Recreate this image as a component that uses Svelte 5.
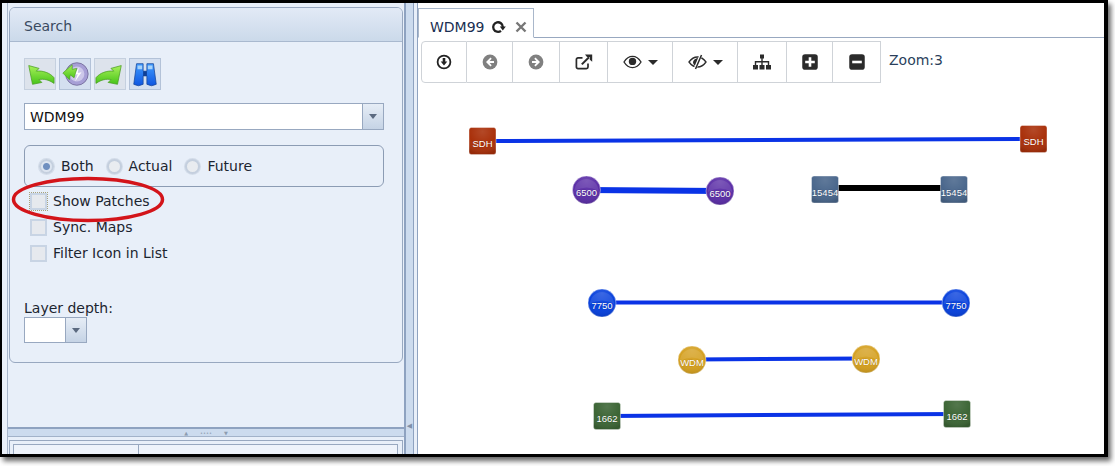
<script>
	const nodes = [
		{ x: 482.5, y: 141, label: 'SDH', fill: '#a9300a', shape: 'square' },
		{ x: 1033.5, y: 139, label: 'SDH', fill: '#a9300a', shape: 'square' },
		{ x: 586.5, y: 190, label: '6500', fill: '#5a2da6', shape: 'circle' },
		{ x: 720, y: 191, label: '6500', fill: '#5a2da6', shape: 'circle' },
		{ x: 825, y: 189.5, label: '15454', fill: '#4a678c', shape: 'square' },
		{ x: 954, y: 189.5, label: '15454', fill: '#4a678c', shape: 'square' },
		{ x: 602, y: 303, label: '7750', fill: '#0740dc', shape: 'circle' },
		{ x: 956, y: 303, label: '7750', fill: '#0740dc', shape: 'circle' },
		{ x: 692, y: 360, label: 'WDM', fill: '#d49f1e', shape: 'circle' },
		{ x: 866, y: 359, label: 'WDM', fill: '#d49f1e', shape: 'circle' },
		{ x: 607, y: 416, label: '1662', fill: '#3c6535', shape: 'square' },
		{ x: 957, y: 414, label: '1662', fill: '#3c6535', shape: 'square' }
	];
	const links = [
		{ a: 0, b: 1, w: 4, c: '#0a33e6', dy: 0 },
		{ a: 2, b: 3, w: 6, c: '#0a33e6', dy: 0 },
		{ a: 4, b: 5, w: 6, c: '#000', dy: -1.5 },
		{ a: 6, b: 7, w: 4, c: '#0a33e6', dy: -0.5 },
		{ a: 8, b: 9, w: 4, c: '#0a33e6', dy: -0.5 },
		{ a: 10, b: 11, w: 4, c: '#0a33e6', dy: 0 }
	];
</script>

<div class="shot">
	<div class="frame">
		<div class="left">
			<div class="left-inner">
				<div class="upper">
					<section class="panel">
						<header class="panel-head">Search</header>
						<div class="panel-body">
							<div class="tools">
								<span class="tool">
									<svg viewBox="0 0 32 32" width="32" height="32"><defs><linearGradient id="grn" x1="0" y1="0" x2="0" y2="1"><stop offset="0" stop-color="#a8f05a"/><stop offset="1" stop-color="#46c418"/></linearGradient></defs><path d="M4 7 L15 10 L12 13 C19 12 27 15 31 20 L31 26 C25 22 20 21 15 22 L18 25 L8 27Z" fill="url(#grn)" stroke="#4a9e22" stroke-width=".8"/></svg>
								</span>
								<span class="tool on">
									<svg viewBox="0 0 32 32" width="32" height="32"><circle cx="18" cy="16" r="12" fill="#a79fd6" stroke="#77709f"/><circle cx="18" cy="16" r="8" fill="#cdc8ea"/><path d="M20 9 L15 17 L19 16 L16 24 L23 14 L19 15Z" fill="#fff"/><path d="M3 15 L13 6 L13 11 L18 10 L15 20 L11 17 L10 22Z" fill="url(#grn)" stroke="#4a9e22" stroke-width=".7"/></svg>
								</span>
								<span class="tool">
									<svg viewBox="0 0 32 32" width="32" height="32"><path d="M28 7 L17 10 L20 13 C13 12 5 15 1 20 L1 26 C7 22 12 21 17 22 L14 25 L24 27Z" fill="url(#grn)" stroke="#4a9e22" stroke-width=".8"/></svg>
								</span>
								<span class="tool on">
									<svg viewBox="0 0 32 32" width="32" height="32"><defs><linearGradient id="blu" x1="0" y1="0" x2="0" y2="1"><stop offset="0" stop-color="#3f9bff"/><stop offset="1" stop-color="#0f55e0"/></linearGradient></defs><path d="M7 5h7v8h4V5h7l3 22q-5 3-10 0V18h-4v9q-5 3-10 0Z" fill="url(#blu)" stroke="#17459a" stroke-width=".8"/><path d="M8 7h5v4H8zM19 7h5v4h-5z" fill="#a6d2fa"/><path d="M14 13h4v5h-4z" fill="#0f3f96"/></svg>
								</span>
							</div>
							<div class="combo wide">
								<span class="combo-text">WDM99</span>
								<span class="combo-btn"><i></i></span>
							</div>
							<div class="radios">
								<label class="radio checked"><i></i>Both</label>
								<label class="radio"><i></i>Actual</label>
								<label class="radio"><i></i>Future</label>
							</div>
							<div class="checks">
								<label class="check focus"><i></i>Show Patches</label>
								<label class="check"><i></i>Sync. Maps</label>
								<label class="check"><i></i>Filter Icon in List</label>
							</div>
							<div class="depth-label">Layer depth:</div>
							<div class="combo small">
								<span class="combo-text"></span>
								<span class="combo-btn"><i></i></span>
							</div>
						</div>
					</section>
				</div>
				<div class="hsplit"><span class="grip">▲</span><span class="dots">••••</span><span class="grip">▼</span></div>
				<div class="lower">
					<div class="grid-head"><span class="col1"></span><span class="col2"></span></div>
				</div>
			</div>
		</div>
		<div class="vsplit"><span>◀</span></div>
		<div class="right">
			<div class="right-inner">
				<div class="tabs">
					<div class="tab">
						WDM99
						<svg class="reload" viewBox="0 0 15 14" width="15" height="14"><path d="M10 10.800A4.800 4.800 0 1 1 11.800 7" fill="none" stroke="#222" stroke-width="2.300"/><path d="M8.800 6.500h6L11.800 10.500Z" fill="#222"/></svg>
						<svg class="close" viewBox="0 0 12 12" width="12" height="12"><path d="M1.500 1.500l9 9M10.500 1.500l-9 9" stroke="#777" stroke-width="2.400"/></svg>
					</div>
				</div>
				<div class="content">
					<div class="toolbar">
						<div class="btns">
							<button class="btn first" aria-label="Download">
								<svg viewBox="0 0 16 16" width="16" height="16"><circle cx="8" cy="8" r="6.400" fill="none" stroke="#222" stroke-width="1.800"/><path d="M6.700 4h2.600v3.500h2L8 11.500 4.700 7.500h2Z" fill="#222"/></svg>
							</button>
							<button class="btn" aria-label="Back">
								<svg viewBox="0 0 16 16" width="16" height="16"><circle cx="8" cy="8" r="7.400" fill="#808080"/><path d="M8.500 3.600 4 8l4.500 4.400 1.200-1.200L7.600 9H12V7H7.600l2.100-2.200Z" fill="#fff"/></svg>
							</button>
							<button class="btn" aria-label="Forward">
								<svg viewBox="0 0 16 16" width="16" height="16"><circle cx="8" cy="8" r="7.400" fill="#808080"/><path d="M7.500 3.600 12 8l-4.500 4.400-1.200-1.200L8.400 9H4V7h4.400L6.300 4.800Z" fill="#fff"/></svg>
							</button>
							<button class="btn" aria-label="Open">
								<svg viewBox="0 0 18 16" width="18" height="16"><path d="M13 9.500V13a1.600 1.600 0 0 1-1.600 1.600H3A1.600 1.600 0 0 1 1.400 13V5.500A1.600 1.600 0 0 1 3 3.900h4.500" fill="none" stroke="#2b2b2b" stroke-width="1.700"/><path d="M6.800 10.400 14 3.200" stroke="#2b2b2b" stroke-width="2"/><path d="M10 .6h7.200v7.200l-2.400-2V3h-2.800Z" fill="#2b2b2b"/></svg>
							</button>
							<button class="btn" aria-label="Show">
								<svg viewBox="0 0 19 14" width="19" height="14"><path d="M1 7C3.500 3 6.500 1.400 9.500 1.400S15.500 3 18 7c-2.500 4-5.500 5.600-8.500 5.600S3.500 11 1 7Z" fill="none" stroke="#2b2b2b" stroke-width="1.400"/><circle cx="9.500" cy="6.400" r="3.700" fill="#2b2b2b"/></svg>
								<i class="caret"></i>
							</button>
							<button class="btn" aria-label="Hide">
								<svg viewBox="0 0 19 16" width="19" height="16"><path d="M1 8C3.500 4.500 6.500 3 9.500 3S15.500 4.500 18 8c-2.500 3.500-5.500 5-8.500 5S3.500 11.500 1 8Z" fill="none" stroke="#2b2b2b" stroke-width="1.300"/><path d="M5 8c1-3 3-4 5.500-4L7.500 12C6 11 5 10 5 8Z" fill="#2b2b2b"/><path d="M13 1 7 15" stroke="#fff" stroke-width="3"/><path d="M13.500 1 7.500 15" stroke="#2b2b2b" stroke-width="1.500"/></svg>
								<i class="caret"></i>
							</button>
							<button class="btn" aria-label="Hierarchy">
								<svg viewBox="0 0 18 16" width="18" height="16"><path d="M7 .5h4v4H7zM0 11h5v4.500H0zM6.500 11h5v4.500h-5zM13 11h5v4.500h-5z" fill="#2b2b2b"/><path d="M9 4v7M2.500 11V7.700h13V11" fill="none" stroke="#2b2b2b" stroke-width="1.400"/></svg>
							</button>
							<button class="btn" aria-label="Zoom in">
								<svg viewBox="0 0 16 16" width="16" height="16"><rect width="15.500" height="15.500" x=".25" y=".25" rx="2.800" fill="#2b2b2b"/><path d="M6.700 3.200h2.600v3.500h3.500v2.600H9.300v3.500H6.700V9.300H3.200V6.700h3.500Z" fill="#fff"/></svg>
							</button>
							<button class="btn" aria-label="Zoom out">
								<svg viewBox="0 0 16 16" width="16" height="16"><rect width="15.500" height="15.500" x=".25" y=".25" rx="2.800" fill="#2b2b2b"/><path d="M3.200 6.700h9.600v2.600H3.200Z" fill="#fff"/></svg>
							</button>
						</div>
						<span class="zoom">Zoom:3</span>
					</div>
					<svg class="graph" width="1115" height="466" viewBox="0 0 1115 466">
						<defs>
							<radialGradient id="gloss" cx=".5" cy=".15" r=".85">
								<stop offset="0" stop-color="#fff" stop-opacity=".12"/>
								<stop offset=".6" stop-color="#fff" stop-opacity="0"/>
								<stop offset="1" stop-color="#000" stop-opacity=".12"/>
							</radialGradient>
						</defs>
						{#each links as l}
							<line x1={nodes[l.a].x} y1={nodes[l.a].y + l.dy} x2={nodes[l.b].x} y2={nodes[l.b].y + l.dy} stroke={l.c} stroke-width={l.w}/>
						{/each}
						{#each nodes as n}
							{#if n.shape === 'circle'}
								<circle cx={n.x} cy={n.y} r="14" fill={n.fill} stroke="#fff" stroke-opacity=".4"/>
								<circle cx={n.x} cy={n.y} r="14" fill="url(#gloss)"/>
								<path d="M{n.x - 12} {n.y + 1}a12 12 0 0 1 24 0q-12-7-24 0Z" fill="#fff" fill-opacity=".1"/>
							{:else}
								<rect x={n.x - 13.500} y={n.y - 13.500} width="27" height="27" rx="2.500" fill={n.fill} stroke="#fff" stroke-opacity=".4"/>
								<rect x={n.x - 13.500} y={n.y - 13.500} width="27" height="27" rx="2.500" fill="url(#gloss)"/>
							{/if}
							<text x={n.x} y={n.y + 6} text-anchor="middle" class="node-label">{n.label}</text>
						{/each}
					</svg>
				</div>
			</div>
		</div>
	</div>
	<svg class="circled" width="154" height="47" viewBox="0 0 154 47">
		<ellipse cx="77" cy="23.500" rx="74.500" ry="21" fill="none" stroke="#d3141a" stroke-width="3.500"/>
	</svg>
</div>

<style>
	:global(body) {
		margin: 0;
		background: #fff;
	}
	.shot {
		position: relative;
		width: 1115px;
		height: 466px;
		overflow: hidden;
		font-family: 'DejaVu Sans', sans-serif;
		font-size: 14px;
		color: #1c2530;
	}
	.circled {
		position: absolute;
		left: 11px;
		top: 176px;
	}
	.frame {
		box-sizing: border-box;
		width: 1108px;
		height: 457px;
		border: solid #000;
		border-width: 3px 4px 3px 2px;
		box-shadow: 3px 4px 5px rgba(0, 0, 0, 0.6);
		display: flex;
		background: #fff;
		overflow: hidden;
	}
	.left {
		width: 402px;
		flex: none;
		padding-left: 5px;
		box-sizing: border-box;
		background: #eaf0f9;
	}
	.left-inner {
		height: 100%;
		box-sizing: border-box;
		display: flex;
		flex-direction: column;
		background: #e8eff9;
		border-left: 1px solid #a8b6ca;
	}
	.upper {
		flex: 1;
		padding: 4px 1px 0;
		min-height: 0;
		border-bottom: 2px solid #8ea2c0;
	}
	.panel {
		height: 356px;
		box-sizing: border-box;
		border: 1px solid #98a8c0;
		border-radius: 6px;
		background: #e8eff9;
		overflow: hidden;
	}
	.panel-head {
		height: 34px;
		box-sizing: border-box;
		padding: 1px 14px 0;
		line-height: 35px;
		font-size: 14px;
		color: #3a4a60;
		background: linear-gradient(#e2eaf6, #cbd9ea);
		border-bottom: 1px solid #a9b9cf;
	}
	.panel-body {
		padding: 16px 14px 0;
	}
	.tools {
		display: flex;
		gap: 3px;
	}
	.tool {
		width: 32px;
		height: 32px;
		box-sizing: border-box;
		display: flex;
		align-items: center;
		justify-content: center;
		background: #dde3ec;
		border: 1px solid #c5d0df;
		overflow: hidden;
	}
	.tool.on {
		background: #d4dff0;
		border-color: #b3c2d8;
	}
	.combo {
		display: flex;
		background: #fff;
		border: 1px solid #98a8c0;
		box-sizing: border-box;
	}
	.combo.wide {
		width: 360px;
		height: 27px;
		margin-top: 13px;
	}
	.combo.small {
		width: 63px;
		height: 26px;
	}
	.combo-text {
		flex: 1;
		padding-left: 5px;
		line-height: 26px;
		font-size: 14px;
		color: #111;
	}
	.combo-btn {
		width: 20px;
		display: flex;
		align-items: center;
		justify-content: center;
		border-left: 1px solid #98a8c0;
		background: linear-gradient(#e6edf6, #c5d3e5);
	}
	.combo-btn i {
		width: 0;
		height: 0;
		border: 4px solid transparent;
		border-top: 5px solid #5b6a80;
		border-bottom: 0;
	}
	.radios {
		width: 360px;
		height: 42px;
		margin-top: 15px;
		box-sizing: border-box;
		border: 1px solid #8c9cb4;
		border-radius: 6px;
		padding-left: 14px;
		display: flex;
		align-items: center;
		gap: 13px;
	}
	.radio {
		display: flex;
		align-items: center;
		gap: 7px;
		color: #1c2530;
	}
	.radio i {
		width: 15px;
		height: 15px;
		border-radius: 50%;
		box-sizing: border-box;
		background: #e9ecf0;
		border: 2px solid #c4cfde;
		box-shadow: 0 0 0 1px #d3dce9;
	}
	.radio.checked i {
		background: radial-gradient(circle, #6f8fbf 0 3px, #dde5f0 4px);
	}
	.checks {
		display: flex;
		flex-direction: column;
		margin-top: 1px;
		padding-left: 6px;
	}
	.check {
		height: 26px;
		display: flex;
		align-items: center;
		gap: 6px;
		color: #1c2530;
	}
	.check i {
		width: 17px;
		height: 17px;
		box-sizing: border-box;
		background: #e6e9ee;
		border: 2px solid #c8d4e4;
	}
	.check.focus i {
		outline: 1px dotted #a8a27c;
	}
	.depth-label {
		margin-top: 33px;
		line-height: 18px;
	}
	.hsplit {
		height: 7px;
		flex: none;
		background: #ccdbee;
		border-bottom: 1px solid #a2b2c9;
		font-size: 5px;
		color: #8c9cb0;
		display: flex;
		align-items: center;
		justify-content: center;
		gap: 12px;
	}
	.lower {
		height: 17px;
		flex: none;
		padding: 3px 1px 0;
		box-sizing: border-box;
		background: #e8eff9;
	}
	.grid-head {
		display: flex;
		height: 100%;
		box-sizing: border-box;
		border: 1px solid #98a8c0;
		border-bottom: 0;
		padding: 3px 4px 0 3px;
	}
	.col1 {
		width: 126px;
		box-sizing: border-box;
		border: 1px solid #98a8c0;
		border-bottom: 0;
		background: #eef3fb;
	}
	.col2 {
		flex: 1;
		border-top: 1px solid #98a8c0;
		border-right: 1px solid #98a8c0;
		background: #eef3fb;
	}
	.vsplit {
		width: 10px;
		flex: none;
		background: #ccdbee;
		border-left: 2px solid #8ea2c0;
		border-right: 1px solid #8ea2c0;
		box-sizing: border-box;
		padding-top: 419px;
		font-size: 7px;
		line-height: 8px;
		text-align: center;
		color: #7f90a8;
	}
	.right {
		flex: 1;
		min-width: 0;
		padding-left: 3px;
		background: #e8eff9;
	}
	.right-inner {
		height: 100%;
		box-sizing: border-box;
		border-left: 1px solid #8ea2c0;
		display: flex;
		flex-direction: column;
		background: #fff;
	}
	.tabs {
		height: 35px;
		flex: none;
		box-sizing: border-box;
		padding-top: 5px;
		border-bottom: 1px solid #98a8c0;
	}
	.tab {
		width: 116px;
		height: 30px;
		box-sizing: border-box;
		border: 1px solid #a9b7ca;
		border-bottom: 1px solid #fff;
		background: #fff;
		display: flex;
		align-items: center;
		padding: 8px 0 0 11px;
		color: #1a2f52;
		font-size: 14px;
	}
	.reload {
		margin-left: 6px;
	}
	.close {
		margin-left: 9px;
	}
	.content {
		flex: 1;
		position: relative;
		min-height: 0;
	}
	.toolbar {
		display: flex;
		padding: 3px 0 0 3px;
	}
	.btns {
		display: grid;
		grid-template-columns: 46px 46px 47px 48px 65px 65px 49px 46px 48px;
		height: 42px;
	}
	.btn {
		padding: 0;
		border: 1px solid #cfd3d8;
		border-left: 0;
		background: #fff;
		display: flex;
		align-items: center;
		justify-content: center;
		gap: 6px;
	}
	.btn.first {
		border-left: 1px solid #cfd3d8;
		border-radius: 4px 0 0 4px;
	}
	.caret {
		width: 0;
		height: 0;
		border: 5px solid transparent;
		border-top: 5px solid #2b2b2b;
		border-bottom: 0;
	}
	.zoom {
		margin: 11px 0 0 8px;
		color: #2b3f5c;
		font-size: 14px;
	}
	.graph {
		position: absolute;
		left: -418px;
		top: -38px;
		pointer-events: none;
	}
	.node-label {
		font-family: 'Liberation Sans', sans-serif;
		font-size: 9.5px;
		fill: #fff;
		stroke: rgba(0, 0, 0, 0.25);
		stroke-width: 0.5px;
		paint-order: stroke;
	}
</style>
